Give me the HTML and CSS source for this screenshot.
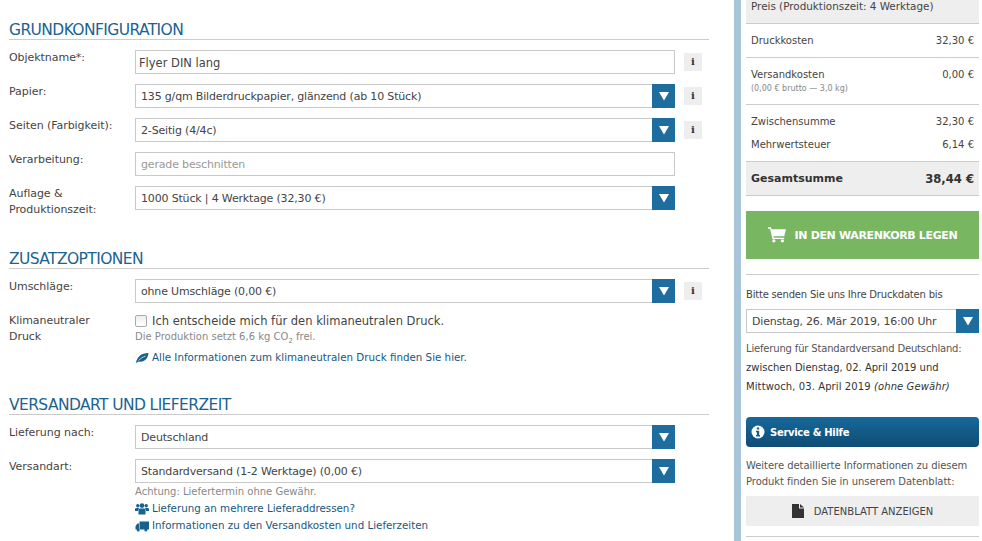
FILE: index.html
```html
<!DOCTYPE html>
<html lang="de">
<head>
<meta charset="utf-8">
<title>Flyer DIN lang</title>
<link rel="stylesheet" href="styles.css">
</head>
<body>
<svg class="defs" width="0" height="0" aria-hidden="true">
  <symbol id="arrow" viewBox="0 0 12 10"><path d="M1 1h10L6 9.500z" fill="#fff"/></symbol>
</svg>
<div class="page">
  <main class="form">
    <section class="sec sec-first">
      <h2>GRUNDKONFIGURATION</h2>
      <div class="row">
        <label>Objektname*:</label>
        <div class="ctl input dark">Flyer DIN lang</div>
        <span class="info">i</span>
      </div>
      <div class="row">
        <label>Papier:</label>
        <div class="ctl select">135 g/qm Bilderdruckpapier, glänzend (ab 10 Stück)<span class="btn"><svg><use href="#arrow"/></svg></span></div>
        <span class="info">i</span>
      </div>
      <div class="row">
        <label>Seiten (Farbigkeit):</label>
        <div class="ctl select">2-Seitig (4/4c)<span class="btn"><svg><use href="#arrow"/></svg></span></div>
        <span class="info">i</span>
      </div>
      <div class="row">
        <label>Verarbeitung:</label>
        <div class="ctl input muted">gerade beschnitten</div>
      </div>
      <div class="row">
        <label>Auflage &amp; Produktionszeit:</label>
        <div class="ctl select">1000 Stück | 4 Werktage (32,30 €)<span class="btn"><svg><use href="#arrow"/></svg></span></div>
      </div>
    </section>
    <section class="sec sec-second">
      <h2>ZUSATZOPTIONEN</h2>
      <div class="row">
        <label>Umschläge:</label>
        <div class="ctl select">ohne Umschläge (0,00 €)<span class="btn"><svg><use href="#arrow"/></svg></span></div>
        <span class="info">i</span>
      </div>
      <div class="row row-top">
        <label>Klimaneutraler Druck</label>
        <div class="stack">
          <div class="check"><span class="box"></span>Ich entscheide mich für den klimaneutralen Druck.</div>
          <div class="note">Die Produktion setzt 6,6 kg CO<sub>2</sub> frei.</div>
          <a class="link link-leaf"><svg class="ico" viewBox="0 0 14 12"><path d="M1 11C2 5 6 1 13.500 1 13 7 9 10.500 4 9.500 3 9.800 2 10.500 1 11z" fill="#17618f"/><path d="M3.500 8.500C5.500 6.500 8 5 10.500 4" stroke="#fff" stroke-width=".7" fill="none"/></svg>Alle Informationen zum klimaneutralen Druck finden Sie hier.</a>
        </div>
      </div>
    </section>
    <section class="sec sec-third">
      <h2>VERSANDART UND LIEFERZEIT</h2>
      <div class="row">
        <label>Lieferung nach:</label>
        <div class="ctl select">Deutschland<span class="btn"><svg><use href="#arrow"/></svg></span></div>
      </div>
      <div class="row row-tight">
        <label>Versandart:</label>
        <div class="ctl select">Standardversand (1-2 Werktage) (0,00 €)<span class="btn"><svg><use href="#arrow"/></svg></span></div>
      </div>
      <div class="after">
        <div class="note">Achtung: Liefertermin ohne Gewähr.</div>
        <a class="link"><svg class="ico" viewBox="0 0 14 12"><g fill="#17618f"><circle cx="2.800" cy="2.800" r="1.700"/><circle cx="11.200" cy="2.800" r="1.700"/><circle cx="7" cy="2.600" r="2.300"/><path d="M0 8V6.200C0 5.300.8 5 1.600 5H4L3 7.500V8zM14 8V6.200C14 5.300 13.200 5 12.400 5H10l1 2.500V8zM3.500 11.500V7.500C3.500 6 4.500 5.500 5.500 5.500h3c1 0 2 .5 2 2v4z"/></g></svg>Lieferung an mehrere Lieferaddressen?</a>
        <a class="link"><svg class="ico" viewBox="0 0 14 12"><g fill="#17618f"><path d="M4.500 1.500H14v8H4.500zM.5 9.500V6L2.500 3.500H4v6z"/><circle cx="3.200" cy="10" r="1.500"/><circle cx="10.800" cy="10" r="1.500"/></g></svg>Informationen zu den Versandkosten und Lieferzeiten</a>
      </div>
    </section>
  </main>
  <div class="strip"></div>
  <aside class="side">
    <div class="price-head">Preis (Produktionszeit: 4 Werktage)</div>
    <div class="line line-a"><span>Druckkosten</span><span>32,30 €</span></div>
    <div class="line line-b"><span>Versandkosten<small>(0,00 € brutto — 3,0 kg)</small></span><span>0,00 €</span></div>
    <div class="group">
      <div class="pair"><span>Zwischensumme</span><span>32,30 €</span></div>
      <div class="pair"><span>Mehrwertsteuer</span><span>6,14 €</span></div>
    </div>
    <div class="total"><span>Gesamtsumme</span><span class="sum">38,44 €</span></div>
    <button class="cart" type="button"><svg viewBox="0 0 20 17" class="cart-ico"><g fill="#fff"><path d="M0 0h3.300l.6 2H20l-2 8H6l.4 1.500H18V13H5L2.200 1.600H0z"/><circle cx="6.500" cy="15" r="1.800"/><circle cx="16" cy="15" r="1.800"/></g></svg>IN DEN WARENKORB LEGEN</button>
    <hr class="rule">
    <p class="send">Bitte senden Sie uns Ihre Druckdaten bis</p>
    <div class="ctl select date">Dienstag, 26. Mär 2019, 16:00 Uhr<span class="btn"><svg><use href="#arrow"/></svg></span></div>
    <p class="deliv">Lieferung für Standardversand Deutschland:<br><span class="dk">zwischen Dienstag, 02. April 2019 und<br><span class="wide">Mittwoch, 03. April 2019 <em>(ohne Gewähr)</em></span></span></p>
    <div class="help"><svg class="help-ico" viewBox="0 0 14 14"><circle cx="7" cy="7" r="6.500" fill="#fff"/><path d="M5.800 2.500h2.400v2H5.800zM5 5.800h3.200v4.200H9v1.500H5V10h.9V7.300H5z" fill="#155f8f"/></svg>Service &amp; Hilfe</div>
    <p class="more">Weitere detaillierte Informationen zu diesem Produkt finden Sie in unserem Datenblatt:</p>
    <button class="sheet" type="button"><svg viewBox="0 0 12 14" class="sheet-ico"><path d="M0 0h7v4.500h5V14H0zM8 0l4 3.500H8z" fill="#333"/></svg>DATENBLATT ANZEIGEN</button>
    <hr class="rule rule-end">
  </aside>
</div>
</body>
</html>
```

FILE: styles.css
```css
* { box-sizing: border-box; }
html, body { margin: 0; height: 541px; overflow: hidden; background: #fff; }
body { font-family: "DejaVu Sans", sans-serif; font-size: 11px; color: #444; }
.defs { position: absolute; }
.page { display: flex; height: 541px; }
.form { width: 700px; margin-left: 9px; flex: none; }
.sec-first { padding-top: 21px; }
.sec-second { padding-top: 22px; }
.sec-third { padding-top: 30px; }
h2 { margin: 0 0 10px; height: 19px; font: 400 15.500px/18px "DejaVu Sans", sans-serif; color: #1a6391; border-bottom: 1px solid #ccc; letter-spacing: -.6px; white-space: nowrap; }
.row { display: flex; align-items: flex-start; margin-bottom: 10px; }
.row label { width: 126px; flex: none; line-height: 16px; padding-right: 10px; font-size: 11px; letter-spacing: -.05px; }
.ctl { position: relative; width: 540px; height: 24px; flex: none; border: 1px solid #c9c9c9; padding: 1px 0 0 5px; line-height: 22px; color: #444; white-space: nowrap; letter-spacing: -.17px; }
.dark { font-size: 11.500px; padding-left: 3px; letter-spacing: 0; }
.muted { color: #999; }
.btn { position: absolute; top: -1px; right: -1px; width: 23px; height: 24px; background: #1f6c9e; display: flex; align-items: center; justify-content: center; }
.btn svg { width: 12px; height: 10px; }
.info { width: 18px; height: 18px; margin: 3px 0 0 9px; background: #eee; color: #333; font: 700 10px/18px "DejaVu Serif", serif; text-align: center; }
.row-top { margin-bottom: 0; }
.stack { width: 540px; }
.check { display: flex; align-items: center; font-size: 11.500px; height: 17px; margin-top: -1px; white-space: nowrap; }
.box { width: 12px; height: 12px; margin-right: 5px; border: 1px solid #aaa; border-radius: 2px; background: linear-gradient(#eee, #fff); }
.note { font-size: 10px; color: #888; line-height: 14px; margin-top: 1px; }
.note sub { font-size: 7px; line-height: 0; }
.link { display: flex; align-items: center; font-size: 10.300px; color: #15577f; line-height: 17px; white-space: nowrap; }
.link-leaf { margin-top: 5px; }
.ico { width: 14px; height: 12px; margin-right: 3px; flex: none; }
.row-tight { margin-bottom: 0; }
.after { margin-left: 126px; }
.after .note { margin: 2px 0 1px; }
.strip { width: 7px; margin-left: 25px; height: 100%; background: #a9c5da; flex: none; }
.side { width: 233px; margin-left: 5px; flex: none; font-size: 10px; }
.price-head { height: 24px; background: #eee; border-bottom: 1px solid #ccc; padding: 0 5px; line-height: 13px; font-size: 10.400px; color: #444; }
.line { display: flex; justify-content: space-between; border-bottom: 1px solid #ccc; padding: 0 5px; }
.line-a { height: 34px; line-height: 33px; }
.line-b { height: 47px; padding-top: 9px; line-height: 15px; }
small { display: block; font-size: 8px; color: #888; line-height: 13px; }
.group { padding: 9px 5px 0; height: 56px; }
.pair { display: flex; justify-content: space-between; line-height: 15px; margin-bottom: 8px; }
.total { display: flex; justify-content: space-between; align-items: center; height: 35px; padding: 0 5px; background: #eee; border-top: 1px solid #ccc; border-bottom: 1px solid #ccc; font-weight: 700; font-size: 11px; color: #333; }
.sum { font-size: 11.600px; }
.cart { display: flex; align-items: center; justify-content: center; width: 233px; height: 48px; margin-top: 15px; border: 0; background: #78b662; color: #fff; font: 700 11px "DejaVu Sans", sans-serif; letter-spacing: -.35px; padding: 0; }
.cart-ico { width: 18px; height: 16px; margin-right: 9px; }
.rule { height: 1px; margin: 15px 0 0; border: 0; background: #ccc; }
.send { margin: 13px 0 7px; line-height: 14px; letter-spacing: -.2px; }
.date { width: 233px; height: 24px; font-size: 11px; letter-spacing: -.2px; }
.deliv { margin: 6px 0 0; line-height: 19px; color: #555; letter-spacing: -.17px; }
.dk { color: #333; letter-spacing: 0; }
.wide { letter-spacing: .1px; }
.help { display: flex; align-items: center; height: 30px; margin-top: 21px; padding-left: 5px; border-radius: 4px; background: linear-gradient(#17699b, #0e4c74); color: #fff; font-weight: 700; font-size: 10px; letter-spacing: -.3px; }
.help-ico { width: 14px; height: 14px; margin-right: 5px; }
.more { margin: 11px 0 0; line-height: 16px; color: #555; letter-spacing: -.05px; }
.sheet { display: flex; align-items: center; justify-content: center; width: 233px; height: 30px; margin-top: 6px; border: 0; background: #eee; color: #444; font: 400 10px "DejaVu Sans", sans-serif; }
.sheet-ico { width: 12px; height: 14px; margin-right: 10px; }
.rule-end { margin-top: 10px; }
```
